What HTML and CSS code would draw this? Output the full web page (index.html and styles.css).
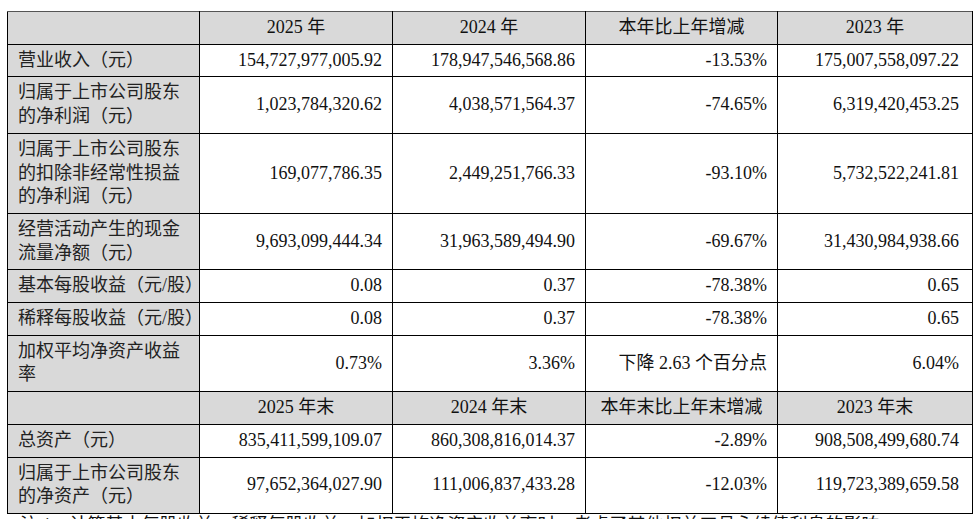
FILE: index.html
```html
<!DOCTYPE html>
<html lang="zh-CN">
<head>
<meta charset="utf-8">
<title>主要会计数据</title>
<link rel="stylesheet" href="styles.css">
</head>
<body>
<table class="fin">
  <colgroup>
    <col class="c-label">
    <col class="c-a">
    <col class="c-b">
    <col class="c-c">
    <col class="c-d">
  </colgroup>
  <tr class="head">
    <td class="label"></td>
    <td>2025 年</td>
    <td>2024 年</td>
    <td>本年比上年增减</td>
    <td>2023 年</td>
  </tr>
  <tr>
    <td class="label">营业收入（元）</td>
    <td>154,727,977,005.92</td>
    <td>178,947,546,568.86</td>
    <td>-13.53%</td>
    <td class="last">175,007,558,097.22</td>
  </tr>
  <tr>
    <td class="label">归属于上市公司股东<br>的净利润（元）</td>
    <td>1,023,784,320.62</td>
    <td>4,038,571,564.37</td>
    <td>-74.65%</td>
    <td class="last">6,319,420,453.25</td>
  </tr>
  <tr>
    <td class="label">归属于上市公司股东<br>的扣除非经常性损益<br>的净利润（元）</td>
    <td>169,077,786.35</td>
    <td>2,449,251,766.33</td>
    <td>-93.10%</td>
    <td class="last">5,732,522,241.81</td>
  </tr>
  <tr>
    <td class="label">经营活动产生的现金<br>流量净额（元）</td>
    <td>9,693,099,444.34</td>
    <td>31,963,589,494.90</td>
    <td>-69.67%</td>
    <td class="last">31,430,984,938.66</td>
  </tr>
  <tr>
    <td class="label">基本每股收益（元/股）</td>
    <td>0.08</td>
    <td>0.37</td>
    <td>-78.38%</td>
    <td class="last">0.65</td>
  </tr>
  <tr>
    <td class="label">稀释每股收益（元/股）</td>
    <td>0.08</td>
    <td>0.37</td>
    <td>-78.38%</td>
    <td class="last">0.65</td>
  </tr>
  <tr>
    <td class="label">加权平均净资产收益<br>率</td>
    <td>0.73%</td>
    <td>3.36%</td>
    <td>下降 2.63 个百分点</td>
    <td class="last">6.04%</td>
  </tr>
  <tr class="head">
    <td class="label"></td>
    <td>2025 年末</td>
    <td>2024 年末</td>
    <td>本年末比上年末增减</td>
    <td>2023 年末</td>
  </tr>
  <tr>
    <td class="label">总资产（元）</td>
    <td>835,411,599,109.07</td>
    <td>860,308,816,014.37</td>
    <td>-2.89%</td>
    <td class="last">908,508,499,680.74</td>
  </tr>
  <tr>
    <td class="label">归属于上市公司股东<br>的净资产（元）</td>
    <td>97,652,364,027.90</td>
    <td>111,006,837,433.28</td>
    <td>-12.03%</td>
    <td class="last">119,723,389,659.58</td>
  </tr>
</table>
<p class="note">注 1：计算基本每股收益、稀释每股收益、加权平均净资产收益率时，考虑了其他权益工具永续债利息的影响。</p>
</body>
</html>
```

FILE: styles.css
```css
html, body {
  margin: 0;
  padding: 0;
  background: #ffffff;
}

body {
  padding: 11px 0 0 7px;
  font-family: "Liberation Serif", "Noto Sans CJK SC", serif;
  font-size: 18px;
  color: #111;
  overflow: hidden;
}

.fin {
  border-collapse: collapse;
  table-layout: fixed;
  width: 965px;
}

.c-label { width: 192px; }
.c-a { width: 193px; }
.c-b { width: 193px; }
.c-c { width: 192px; }
.c-d { width: 195px; }

.fin td {
  border: 1px solid #000;
  padding: 4px 10px 4px 10px;
  line-height: 23.7px;
  text-align: right;
  vertical-align: middle;
  white-space: nowrap;
}

.fin td.last {
  padding-right: 13px;
}

.fin td.label {
  background: #d9d9d9;
  text-align: left;
  padding-left: 10px;
  color: #222;
}

.fin tr.head td {
  background: #d9d9d9;
  text-align: center;
}

.fin tr:first-child td {
  border-top-color: #555;
}

.note {
  margin: 0;
  padding: 0 0 0 13px;
  line-height: 23px;
  white-space: nowrap;
  color: #111;
}
```
